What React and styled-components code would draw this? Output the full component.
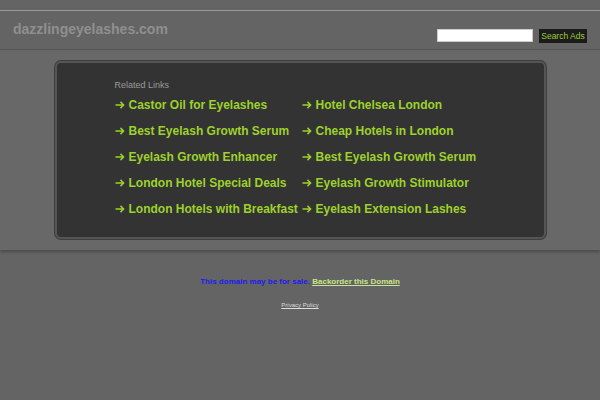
import React from "react";
import styled, { createGlobalStyle } from "styled-components";

const Global = createGlobalStyle`
  html, body {
    margin: 0;
    padding: 0;
    background: #646464;
    font-family: "Liberation Sans", Arial, sans-serif;
  }
`;

const Page = styled.div`
  padding-top: 10px;
  height: 390px;
  overflow: hidden;
`;

const Header = styled.div`
  border-top: 1px solid #9a9a9a;
  border-bottom: 1px solid #575757;
  height: 38px;
  display: flex;
  align-items: center;
  padding: 0 13px;
`;

const Domain = styled.div`
  color: #8f8f8f;
  font-size: 14px;
  font-weight: bold;
  margin-top: -2px;
`;

const SearchForm = styled.div`
  margin-left: auto;
  display: flex;
  align-items: center;
  gap: 6px;
  margin-top: 11px;
`;

const SearchInput = styled.div`
  width: 94px;
  height: 11px;
  background: #fff;
  border: 1px solid #ccc;
`;

const SearchButton = styled.div`
  background: #1b1b1b;
  color: #9ccc3a;
  font-size: 8.5px;
  padding: 2px 2px;
  line-height: 10px;
  width: 44px;
  text-align: center;
`;

const Band = styled.div`
  background: #686868;
  padding: 11px 0 11px;
  box-shadow: 0 2px 3px rgba(0, 0, 0, 0.25);
`;

const Panel = styled.div`
  width: 491px;
  margin: 0 auto;
  background: #333;
  border: 2px solid #555;
  box-shadow: 0 0 0 1px #3e3e3e;
  border-radius: 6px;
  padding: 17px 0 0 58px;
  box-sizing: border-box;
  height: 178px;
`;

const Caption = styled.div`
  color: #9a9a9a;
  font-size: 9px;
  line-height: 10px;
  margin-bottom: 7px;
`;

const Links = styled.div`
  display: grid;
  grid-template-columns: 187px 187px;
  grid-auto-rows: 26px;
`;

const LinkItem = styled.div`
  color: #9dd12c;
  font-size: 12px;
  font-weight: bold;
  white-space: nowrap;
  height: 16px;
  line-height: 16px;
  display: flex;
  align-items: center;
`;

const ArrowIcon = styled.svg`
  width: 10px;
  height: 8px;
  margin-right: 4px;
  flex: none;
`;

const Footer = styled.div`
  text-align: center;
  padding-top: 27px;
  font-size: 8px;
  font-weight: bold;
`;

const Sale = styled.span`
  color: #1c1cf0;
`;

const Backorder = styled.span`
  color: #c8e58a;
  text-decoration: underline;
`;

const Privacy = styled.div`
  text-align: center;
  color: #dcdcdc;
  font-size: 6px;
  text-decoration: underline;
  margin-top: 16px;
`;

const Arrow = () => (
  <ArrowIcon viewBox="0 0 10 8">
    <path
      d="M0.5 4 H8.6 M5.5 0.9 L8.6 4 L5.5 7.1"
      fill="none"
      stroke="currentColor"
      strokeWidth="1.5"
    />
  </ArrowIcon>
);

const left = [
  "Castor Oil for Eyelashes",
  "Best Eyelash Growth Serum",
  "Eyelash Growth Enhancer",
  "London Hotel Special Deals",
  "London Hotels with Breakfast",
];

const right = [
  "Hotel Chelsea London",
  "Cheap Hotels in London",
  "Best Eyelash Growth Serum",
  "Eyelash Growth Stimulator",
  "Eyelash Extension Lashes",
];

const App = () => {
  const items = [];
  left.forEach((l, i) => {
    items.push(l, right[i]);
  });
  return (
    <Page>
      <Global />
      <Header>
        <Domain>dazzlingeyelashes.com</Domain>
        <SearchForm>
          <SearchInput />
          <SearchButton>Search Ads</SearchButton>
        </SearchForm>
      </Header>
      <Band>
        <Panel>
          <Caption>Related Links</Caption>
          <Links>
            {items.map((t, i) => (
              <LinkItem key={i}>
                <Arrow />
                {t}
              </LinkItem>
            ))}
          </Links>
        </Panel>
      </Band>
      <Footer>
        <Sale>This domain may be for sale. </Sale>
        <Backorder>Backorder this Domain</Backorder>
      </Footer>
      <Privacy>Privacy Policy</Privacy>
    </Page>
  );
};

export default App;
